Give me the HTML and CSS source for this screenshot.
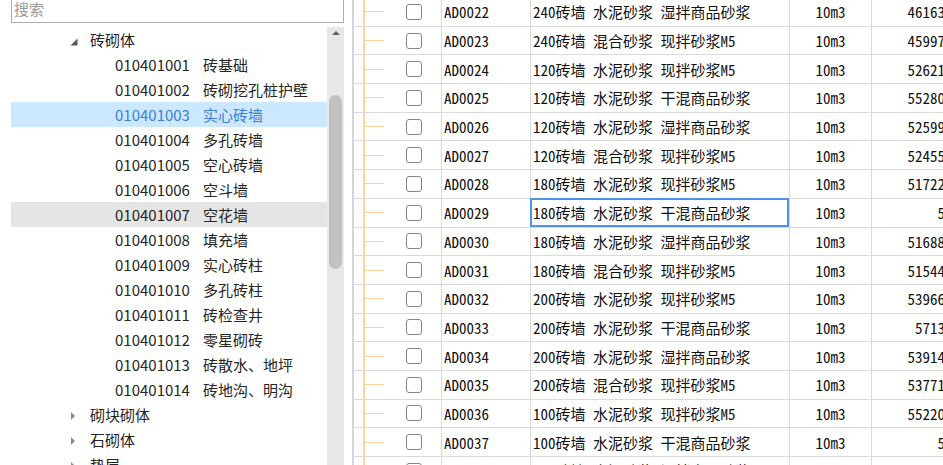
FILE: index.html
```html
<!DOCTYPE html>
<html lang="zh-CN">
<head>
    <meta charset="UTF-8">
    <title>清单定额</title>
    <link rel="stylesheet" href="styles.css">
</head>
<body>
<div class="app">
    <aside class="side">
        <div class="search">搜索</div>
        <div class="tree-box">
            <ul class="tree">
                <li class="node"><span class="tw"><svg width="8" height="8" viewBox="0 0 8 8"><polygon points="0.5,7.5 7.5,0.5 7.5,7.5" fill="#5a5a5a"/></svg></span>砖砌体</li>
                <li class="leaf"><span class="code">010401001</span>砖基础</li>
                <li class="leaf"><span class="code">010401002</span>砖砌挖孔桩护壁</li>
                <li class="leaf selected"><span class="code">010401003</span>实心砖墙</li>
                <li class="leaf"><span class="code">010401004</span>多孔砖墙</li>
                <li class="leaf"><span class="code">010401005</span>空心砖墙</li>
                <li class="leaf"><span class="code">010401006</span>空斗墙</li>
                <li class="leaf hover"><span class="code">010401007</span>空花墙</li>
                <li class="leaf"><span class="code">010401008</span>填充墙</li>
                <li class="leaf"><span class="code">010401009</span>实心砖柱</li>
                <li class="leaf"><span class="code">010401010</span>多孔砖柱</li>
                <li class="leaf"><span class="code">010401011</span>砖检查井</li>
                <li class="leaf"><span class="code">010401012</span>零星砌砖</li>
                <li class="leaf"><span class="code">010401013</span>砖散水、地坪</li>
                <li class="leaf"><span class="code">010401014</span>砖地沟、明沟</li>
                <li class="node"><span class="tw"><svg width="8" height="10" viewBox="0 0 8 10"><polygon points="1,1 5,5 1,9" fill="#8c8c8c"/></svg></span>砌块砌体</li>
                <li class="node"><span class="tw"><svg width="8" height="10" viewBox="0 0 8 10"><polygon points="1,1 5,5 1,9" fill="#8c8c8c"/></svg></span>石砌体</li>
                <li class="node"><span class="tw"><svg width="8" height="10" viewBox="0 0 8 10"><polygon points="1,1 5,5 1,9" fill="#8c8c8c"/></svg></span>垫层</li>
            </ul>
            <div class="vbar">
                <b class="up"></b>
                <b class="thumb"></b>
            </div>
        </div>
    </aside>

    <section class="grid">
        <div class="row"><div class="c-tree"><span class="chk"></span></div><div class="c-code">AD0022</div><div class="c-name">240砖墙 水泥砂浆 湿拌商品砂浆</div><div class="c-unit">10m3</div><div class="c-num">46163.9</div></div>
        <div class="row"><div class="c-tree"><span class="chk"></span></div><div class="c-code">AD0023</div><div class="c-name">240砖墙 混合砂浆 现拌砂浆M5</div><div class="c-unit">10m3</div><div class="c-num">45997.2</div></div>
        <div class="row"><div class="c-tree"><span class="chk"></span></div><div class="c-code">AD0024</div><div class="c-name">120砖墙 水泥砂浆 现拌砂浆M5</div><div class="c-unit">10m3</div><div class="c-num">52621.8</div></div>
        <div class="row"><div class="c-tree"><span class="chk"></span></div><div class="c-code">AD0025</div><div class="c-name">120砖墙 水泥砂浆 干混商品砂浆</div><div class="c-unit">10m3</div><div class="c-num">55280.4</div></div>
        <div class="row"><div class="c-tree"><span class="chk"></span></div><div class="c-code">AD0026</div><div class="c-name">120砖墙 水泥砂浆 湿拌商品砂浆</div><div class="c-unit">10m3</div><div class="c-num">52599.3</div></div>
        <div class="row"><div class="c-tree"><span class="chk"></span></div><div class="c-code">AD0027</div><div class="c-name">120砖墙 混合砂浆 现拌砂浆M5</div><div class="c-unit">10m3</div><div class="c-num">52455.7</div></div>
        <div class="row"><div class="c-tree"><span class="chk"></span></div><div class="c-code">AD0028</div><div class="c-name">180砖墙 水泥砂浆 现拌砂浆M5</div><div class="c-unit">10m3</div><div class="c-num">51722.6</div></div>
        <div class="row"><div class="c-tree"><span class="chk"></span></div><div class="c-code">AD0029</div><div class="c-name focus">180砖墙 水泥砂浆 干混商品砂浆</div><div class="c-unit">10m3</div><div class="c-num">5.8</div></div>
        <div class="row"><div class="c-tree"><span class="chk"></span></div><div class="c-code">AD0030</div><div class="c-name">180砖墙 水泥砂浆 湿拌商品砂浆</div><div class="c-unit">10m3</div><div class="c-num">51688.5</div></div>
        <div class="row"><div class="c-tree"><span class="chk"></span></div><div class="c-code">AD0031</div><div class="c-name">180砖墙 混合砂浆 现拌砂浆M5</div><div class="c-unit">10m3</div><div class="c-num">51544.9</div></div>
        <div class="row"><div class="c-tree"><span class="chk"></span></div><div class="c-code">AD0032</div><div class="c-name">200砖墙 水泥砂浆 现拌砂浆M5</div><div class="c-unit">10m3</div><div class="c-num">53966.1</div></div>
        <div class="row"><div class="c-tree"><span class="chk"></span></div><div class="c-code">AD0033</div><div class="c-name">200砖墙 水泥砂浆 干混商品砂浆</div><div class="c-unit">10m3</div><div class="c-num">5713.6</div></div>
        <div class="row"><div class="c-tree"><span class="chk"></span></div><div class="c-code">AD0034</div><div class="c-name">200砖墙 水泥砂浆 湿拌商品砂浆</div><div class="c-unit">10m3</div><div class="c-num">53914.7</div></div>
        <div class="row"><div class="c-tree"><span class="chk"></span></div><div class="c-code">AD0035</div><div class="c-name">200砖墙 混合砂浆 现拌砂浆M5</div><div class="c-unit">10m3</div><div class="c-num">53771.1</div></div>
        <div class="row"><div class="c-tree"><span class="chk"></span></div><div class="c-code">AD0036</div><div class="c-name">100砖墙 水泥砂浆 现拌砂浆M5</div><div class="c-unit">10m3</div><div class="c-num">55220.8</div></div>
        <div class="row"><div class="c-tree"><span class="chk"></span></div><div class="c-code">AD0037</div><div class="c-name">100砖墙 水泥砂浆 干混商品砂浆</div><div class="c-unit">10m3</div><div class="c-num">5.4</div></div>
        <div class="row"><div class="c-tree"><span class="chk"></span></div><div class="c-code">AD0038</div><div class="c-name">100砖墙 水泥砂浆 湿拌商品砂浆</div><div class="c-unit">10m3</div><div class="c-num">55187.2</div></div>
    </section>
</div>
</body>
</html>
```

FILE: styles.css
```css
body {
    margin: 0;
    width: 943px;
    height: 465px;
    overflow: hidden;
    background: #fff;
    font-family: "Noto Sans CJK SC", sans-serif;
}
.app {
    display: flex;
    height: 465px;
    overflow: hidden;
}

/* left tree */
.side {
    flex: none;
    width: 345px;
}
.search {
    box-sizing: border-box;
    width: 333px;
    height: 29px;
    margin: -6px 0 0 11px;
    padding-left: 2px;
    border: 1px solid #abadb3;
    line-height: 27px;
    font-size: 15px;
    color: #9a9a9a;
}
.tree-box {
    display: flex;
    height: 440px;
    margin: 4px 0 0 11px;
}
.tree {
    width: 316px;
    margin: 0;
    padding: 0;
    list-style: none;
}
.tree li {
    height: 25px;
    line-height: 25px;
    font-size: 15px;
    color: #262626;
    white-space: nowrap;
}
.tree .node {
    padding-left: 59px;
}
.tree .leaf {
    padding-left: 104px;
}
.tw {
    display: inline-block;
    width: 20px;
}
.code {
    display: inline-block;
    width: 88px;
}
.tree .selected {
    background: #cce8ff;
    color: #3d7fd6;
}
.tree .hover {
    background: #e5e5e5;
}
.vbar {
    flex: none;
    width: 17px;
    background: #e8e8e8;
    display: flex;
    flex-direction: column;
    align-items: center;
}
.up {
    width: 0;
    height: 0;
    margin-top: 4px;
    border-left: 4.5px solid transparent;
    border-right: 4.5px solid transparent;
    border-bottom: 4px solid #606060;
}
.thumb {
    width: 13px;
    height: 174px;
    margin-top: 60px;
    border-radius: 7px;
    background: #c1c1c1;
}

/* right grid */
.grid {
    flex: none;
    width: 589px;
    margin-left: 7px;
    border-left: 2px solid #d6d6d6;
    overflow: hidden;
    font-family: "Noto Sans Mono CJK SC", "Noto Sans CJK SC", sans-serif;
    font-size: 15px;
    color: #111;
}
.row {
    display: grid;
    grid-template-columns: 88px 89px 259px 82px 92px;
    height: 28.7px;
}
.row:first-child {
    margin-top: -2px;
}
.row > div {
    box-sizing: border-box;
    border-right: 1px solid #dadada;
    border-bottom: 1px solid #dadada;
    display: flex;
    align-items: center;
    white-space: nowrap;
}
.c-tree {
    padding-left: 52px;
    background:
        linear-gradient(#ffd49c, #ffd49c) 9px 0 / 2px 100% no-repeat,
        linear-gradient(#ffd49c, #ffd49c) 9px 50% / 21px 1px no-repeat;
}
.chk {
    box-sizing: border-box;
    width: 16px;
    height: 16px;
    border: 1px solid #858585;
    border-radius: 3px;
    background: #fff;
}
.c-code,
.c-name {
    padding-left: 2px;
}
.c-unit {
    justify-content: center;
}
.c-num {
    justify-content: flex-end;
    padding-right: 3px;
}
.c-name.focus {
    position: relative;
}
.c-name.focus::after {
    content: "";
    position: absolute;
    top: -1px;
    left: -1px;
    right: 0;
    bottom: 0;
    border: 2px solid #4a93e6;
}
```
